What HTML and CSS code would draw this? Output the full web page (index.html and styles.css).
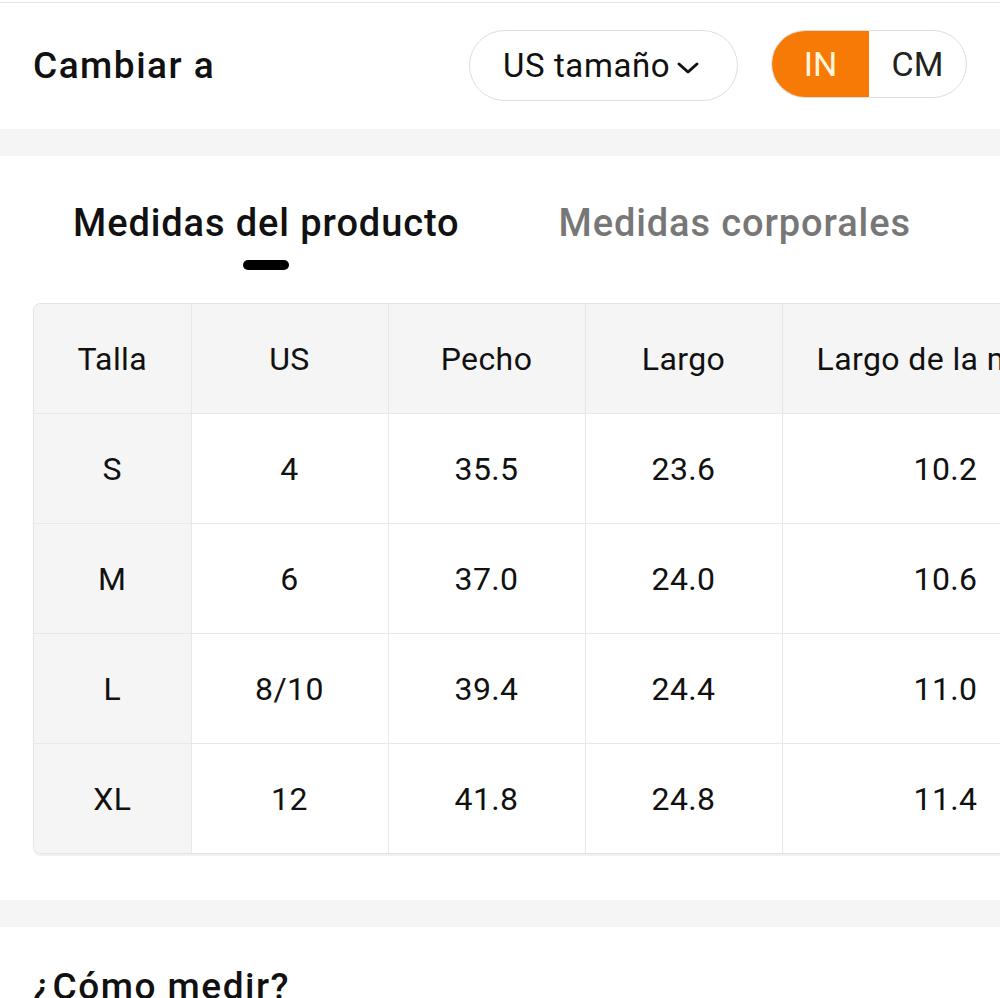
FILE: index.html
```html
<!DOCTYPE html>
<html lang="es">
<head>
<meta charset="utf-8">
<title>Guía de tallas</title>
<link rel="stylesheet" href="styles.css">
</head>
<body>
<div class="page">
  <header class="topbar">
    <div class="title">Cambiar a</div>
    <div class="controls">
      <div class="select">
        <span>US tamaño</span>
        <svg class="chev" width="24" height="14" viewBox="0 0 24 14"><path d="M3 3 L12 11 L21 3" fill="none" stroke="#111" stroke-width="3" stroke-linecap="round" stroke-linejoin="round"/></svg>
      </div>
      <div class="toggle">
        <span class="seg active">IN</span>
        <span class="seg">CM</span>
      </div>
    </div>
  </header>
  <div class="band"></div>
  <section class="sizes">
    <nav class="tabs">
      <div class="tab active"><span>Medidas del producto</span><i class="bar"></i></div>
      <div class="tab"><span>Medidas corporales</span></div>
    </nav>
    <div class="table-wrap">
      <table class="chart">
        <colgroup>
          <col class="c1"><col class="c2"><col class="c2"><col class="c2"><col class="c5">
        </colgroup>
        <thead>
          <tr><th>Talla</th><th>US</th><th>Pecho</th><th>Largo</th><th>Largo de la manga</th></tr>
        </thead>
        <tbody>
          <tr><th>S</th><td>4</td><td>35.5</td><td>23.6</td><td>10.2</td></tr>
          <tr><th>M</th><td>6</td><td>37.0</td><td>24.0</td><td>10.6</td></tr>
          <tr><th>L</th><td>8/10</td><td>39.4</td><td>24.4</td><td>11.0</td></tr>
          <tr><th>XL</th><td>12</td><td>41.8</td><td>24.8</td><td>11.4</td></tr>
        </tbody>
      </table>
    </div>
  </section>
  <div class="band"></div>
  <section class="howto">
    <h2>¿Cómo medir?</h2>
  </section>
</div>
</body>
</html>
```
FILE: styles.css
```css
html, body {
  margin: 0;
  padding: 0;
  background: #fff;
}
body {
  font-family: Roboto, "Noto Sans", "Liberation Sans", sans-serif;
  color: #111;
  width: 1000px;
  height: 998px;
  overflow: hidden;
}
.page {
  width: 1000px;
  overflow: hidden;
}
.topbar {
  height: 127px;
  border-top: 1px solid #e4e4e4;
  margin-top: 2px;
  display: flex;
  align-items: center;
  justify-content: space-between;
  padding: 0 33px;
  box-sizing: border-box;
}
.title {
  font-size: 37px;
  font-weight: 500;
  letter-spacing: 1.5px;
  margin-top: -1px;
}
.controls {
  display: flex;
  align-items: center;
  gap: 33px;
  margin-top: -5px;
}
.select {
  height: 71px;
  width: 269px;
  box-sizing: border-box;
  border: 1.5px solid #dedede;
  border-radius: 36px;
  display: flex;
  align-items: center;
  padding-left: 33px;
  gap: 6px;
  font-size: 33px;
  letter-spacing: 0.6px;
  color: #111;
  margin-top: 4px;
}
.chev {
  margin-top: 4px;
}
.toggle {
  height: 68px;
  width: 196px;
  box-sizing: border-box;
  border: 1.5px solid #dedede;
  border-radius: 34px;
  display: flex;
  overflow: hidden;
  font-size: 34px;
}
.seg {
  flex: 1;
  display: flex;
  align-items: center;
  justify-content: center;
  color: #222;
}
.seg.active {
  background: #f77a06;
  color: #fff4dc;
  flex: 0 0 97px;
}
.band {
  height: 27px;
  background: #f5f5f5;
}
.sizes {
  padding-bottom: 46px;
}
.tabs {
  display: flex;
  gap: 99px;
  padding-left: 73px;
  height: 147px;
  box-sizing: border-box;
  padding-top: 45px;
}
.tab {
  display: flex;
  flex-direction: column;
  align-items: center;
  font-size: 38px;
  letter-spacing: 0.9px;
  font-weight: 500;
  color: #777;
}
.tab.active {
  color: #111;
}
.bar {
  display: block;
  width: 46px;
  height: 10px;
  border-radius: 5px;
  background: #000;
  margin-top: 15px;
}
.table-wrap {
  margin-left: 33px;
  width: 1080px;
  border: 1.5px solid #e4e4e4;
  border-right: none;
  border-radius: 8px 0 0 8px;
  overflow: hidden;
  box-shadow: 0 2px 1px rgba(0,0,0,0.06);
}
.chart {
  border-collapse: collapse;
  table-layout: fixed;
  width: 1080px;
  font-size: 32px;
  letter-spacing: 0.4px;
}
.chart col.c1 { width: 157px; }
.chart col.c2 { width: 197px; }
.chart col.c5 { width: 332px; }
.chart th, .chart td {
  height: 109px;
  padding: 0;
  text-align: center;
  font-weight: 400;
  color: #111;
  border: 1.5px solid #e8e8e8;
  white-space: nowrap;
}
.chart tr:first-child th, .chart tr:first-child td { border-top: none; }
.chart tr > :first-child { border-left: none; }
.chart tbody tr:last-child > * { border-bottom: none; }
.chart thead th { background: #f5f5f5; }
.chart tbody th { background: #f5f5f5; }
.chart td:last-child { text-align: right; padding-right: 136px; }
.chart thead th:last-child { text-align: left; padding-left: 34px; }
.howto {
  padding: 38px 33px 0;
}
.howto h2 {
  margin: 0;
  font-size: 37px;
  letter-spacing: 1.5px;
  font-weight: 500;
}
```
